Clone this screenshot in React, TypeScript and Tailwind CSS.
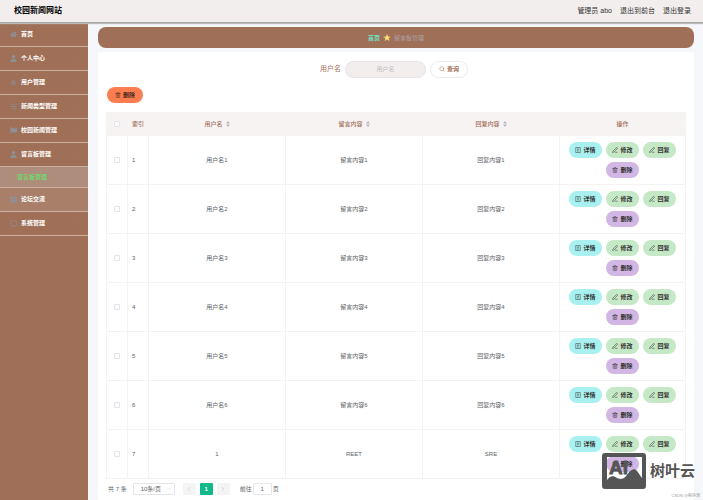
import type { ReactNode } from "react";
import { ChevronDown, ChevronLeft, ChevronRight, PenLine, Search, Trash2 } from "lucide-react";
import { FaBars, FaBell, FaFlag, FaHome, FaThLarge, FaUser } from "react-icons/fa";

type MenuItem = { label: string; icon: ReactNode; arrow: boolean; open?: boolean; light?: boolean };

const menu: MenuItem[] = [
  { label: "首页", icon: <FaHome />, arrow: false },
  { label: "个人中心", icon: <FaUser />, arrow: true },
  { label: "用户管理", icon: <FaBell className="opacity-50" />, arrow: true },
  { label: "新闻类型管理", icon: <FaBars className="opacity-70" />, arrow: true },
  { label: "校园新闻管理", icon: <FaFlag />, arrow: true },
  { label: "留言板管理", icon: <FaUser />, arrow: true, open: true },
  { label: "论坛交流", icon: <FaThLarge />, arrow: false, light: true },
  {
    label: "系统管理",
    icon: (
      <svg viewBox="0 0 16 16" width="1em" height="1em" fill="none" stroke="currentColor" strokeWidth="2" opacity=".7">
        <rect x="1" y="2" width="14" height="11" rx="1" />
        <path d="M4 15h8" />
      </svg>
    ),
    arrow: true,
  },
];

const rows = [
  ["用户名1", "留言内容1", "回复内容1"],
  ["用户名2", "留言内容2", "回复内容2"],
  ["用户名3", "留言内容3", "回复内容3"],
  ["用户名4", "留言内容4", "回复内容4"],
  ["用户名5", "留言内容5", "回复内容5"],
  ["用户名6", "留言内容6", "回复内容6"],
  ["1", "REET", "SRE"],
];

function Sheet({ className }: { className?: string }) {
  return (
    <svg viewBox="0 0 24 24" className={className} fill="none" stroke="currentColor" strokeWidth="2">
      <path d="M3 2h18v20H3zM8 8h8M8 12h8M8 17h3M14 17h2" />
    </svg>
  );
}

const actions = [
  { label: "详情", icon: Sheet, color: "bg-[#a9f0f0]" },
  { label: "修改", icon: PenLine, color: "bg-[#c5e8c6]" },
  { label: "回复", icon: PenLine, color: "bg-[#c5e8c6]" },
  { label: "删除", icon: Trash2, color: "bg-[#d2b6e4]" },
];

function Tick({ label }: { label: string }) {
  return (
    <input
      type="checkbox"
      aria-label={label}
      className="mx-auto block size-[6px] appearance-none rounded-[1px] border border-[#e2e4e9] bg-white checked:bg-[#10b88a]"
    />
  );
}

function SortHead({ label }: { label: string }) {
  return (
    <th className="border-r border-b border-[#f3f3f4] font-medium">
      <button className="inline-flex items-center gap-[3px]">
        {label}
        <svg viewBox="0 0 8 12" className="h-[6px] w-[4px] fill-[#b4b7c0]">
          <path d="M4 0 8 5H0zM4 12 0 7h8z" />
        </svg>
      </button>
    </th>
  );
}

export default function App() {
  return (
    <div className="relative flex min-h-screen flex-col bg-[#f5f7fa] font-['Liberation_Sans','Noto_Sans_CJK_SC',sans-serif] text-[6px] leading-[8px] text-[#606266]">
      <header className="z-10 flex h-[23px] items-center justify-between border-b border-[#a9a9ab] bg-[#f3eeee] pr-3 pl-[14px] shadow-[0_1px_1px_#bbbbbb]">
        <h1 className="text-[8px] leading-[12px] font-bold text-black">校园新闻网站</h1>
        <nav className="flex gap-2 text-[7px] text-[#333333]">
          <span>管理员 abo</span>
          <a href="#front">退出到前台</a>
          <a href="#logout">退出登录</a>
        </nav>
      </header>

      <div className="flex flex-1">
        <aside className="w-[88px] shrink-0 bg-[#9f6f57]">
          {menu.map((item) => (
            <div key={item.label}>
              <a
                href="#menu"
                className={`flex h-6 items-center border-b border-[#cbb0a2] pr-2 pb-px pl-[10px] font-bold text-white ${item.light ? "bg-[#a97f6a]" : ""}`}
              >
                <span className="mr-1 text-[7px] text-[#8f9096]">{item.icon}</span>
                <span className="flex-1">{item.label}</span>
                {item.arrow && <ChevronDown className="size-[4px] text-[#b7917d]" />}
              </a>
              {item.open && (
                <a
                  href="#board"
                  className="flex h-[21px] items-center border-b border-[#cbb0a2] bg-[#ae8d7c] pb-px pl-[17px] font-bold text-[#74d66e]"
                >
                  留言板管理
                </a>
              )}
            </div>
          ))}
        </aside>

        <main className="flex min-w-0 flex-1 flex-col pt-1 pr-[9px] pl-[10px]">
          <nav aria-label="路径" className="flex h-[21px] items-center justify-center gap-[3px] rounded-[8px] bg-[#9f6f57]">
            <a href="#home" className="font-bold text-[#6fe0c6]">首页</a>
            <span className="text-[8px] text-[#ffe27a]">★</span>
            <span className="text-[#aea1a4]">留言板管理</span>
          </nav>

          <section className="mt-1 flex-1 bg-white px-2 pt-2">
            <form className="flex h-[18px] items-center justify-center pr-1" onSubmit={(e) => e.preventDefault()}>
              <label htmlFor="username" className="mr-1 text-[7px] text-[#9f6f57]">用户名</label>
              <input
                id="username"
                placeholder="用户名"
                className="mr-1 h-[17px] w-[81px] rounded-full border border-[#e8e2e6] bg-[#f3eeee] text-center text-[6px] placeholder:text-[#c3bcc2]"
              />
              <button className="flex h-[17px] w-[38px] items-center justify-center gap-[2px] rounded-full border border-[#e9ebf0] bg-white font-bold text-[#9f6f57]">
                <Search className="size-[6px]" />
                查询
              </button>
            </form>

            <button className="mt-[9px] ml-px flex h-4 w-9 items-center justify-center gap-[2px] rounded-full bg-[#fc7d50] font-bold text-[#4a2c20]">
              <Trash2 className="size-[6px]" />
              删除
            </button>

            <table className="mt-[9px] w-full table-fixed border-separate border-spacing-0 border-t border-l border-[#f3f3f4] text-center">
              <colgroup>
                <col className="w-[21px]" />
                <col className="w-[21px]" />
                <col />
                <col />
                <col />
                <col className="w-[126px]" />
              </colgroup>
              <thead className="bg-[#f7f3f2] text-[#9f6f57]">
                <tr className="h-[23px]">
                  <th className="border-r border-b border-[#f3f3f4]"><Tick label="全选" /></th>
                  <th className="border-r border-b border-[#f3f3f4] pl-1 text-left font-medium">索引</th>
                  <SortHead label="用户名" />
                  <SortHead label="留言内容" />
                  <SortHead label="回复内容" />
                  <th className="border-r border-b border-[#f3f3f4] font-medium">操作</th>
                </tr>
              </thead>
              <tbody>
                {rows.map((cells, i) => (
                  <tr key={i} className="h-[49px]">
                    <td className="border-r border-b border-[#f3f3f4]"><Tick label={`选择第${i + 1}行`} /></td>
                    <td className="border-r border-b border-[#f3f3f4] pl-1 text-left">{i + 1}</td>
                    {cells.map((cell, j) => (
                      <td key={j} className="border-r border-b border-[#f3f3f4]">{cell}</td>
                    ))}
                    <td className="border-r border-b border-[#f3f3f4]">
                      <div className="flex flex-wrap justify-center gap-1 px-2">
                        {actions.map(({ label, icon: Icon, color }) => (
                          <button key={label} className={`flex h-4 w-[33px] items-center justify-center gap-[2px] rounded-full font-bold text-[#333333] ${color}`}>
                            <Icon className="size-[6px]" />
                            {label}
                          </button>
                        ))}
                      </div>
                    </td>
                  </tr>
                ))}
              </tbody>
            </table>

            <div className="flex h-5 items-center pl-[2px]">
              <span className="mr-[6px]">共 7 条</span>
              <span className="relative mr-2 flex items-center">
                <select aria-label="每页条数" className="h-3 w-[42px] appearance-none rounded-[1px] border border-[#e4e6eb] bg-white pl-[7px] text-[6px] leading-[8px]">
                  <option>10条/页</option>
                  <option>20条/页</option>
                </select>
                <ChevronDown className="pointer-events-none absolute right-1 size-[4px] text-[#c0c4cc]" />
              </span>
              <button aria-label="上一页" className="mr-1 flex h-3 w-[13px] items-center justify-center rounded-[1px] bg-[#f4f4f5] text-[#b4b8c0]">
                <ChevronLeft className="size-[6px]" />
              </button>
              <button className="mr-1 h-3 w-[13px] rounded-[1px] bg-[#10b88a] font-bold text-white">1</button>
              <button aria-label="下一页" className="mr-[10px] flex h-3 w-[13px] items-center justify-center rounded-[1px] bg-[#f4f4f5] text-[#b4b8c0]">
                <ChevronRight className="size-[6px]" />
              </button>
              <label htmlFor="page" className="mr-px">前往</label>
              <input id="page" defaultValue="1" className="mr-px h-3 w-[19px] rounded-[1px] border border-[#e4e6eb] text-center text-[6px]" />
              <span>页</span>
            </div>
          </section>
        </main>
      </div>

      <div className="pointer-events-none absolute right-2 bottom-[11px] z-20 flex items-center gap-1 text-[#555555]">
        <svg viewBox="0 0 44 36" className="h-9 w-11">
          <path
            fillRule="evenodd"
            fill="currentColor"
            d="M3 0h38a3 3 0 0 1 3 3v30a3 3 0 0 1-3 3H3a3 3 0 0 1-3-3V3a3 3 0 0 1 3-3zM5 4v23c3-4 6-5 10-2 4 2 7 1 10-3 3-5 7-8 10-4 2 2 3 5 5 7V4z"
          />
          <text x="7" y="21" fontSize="19" fontWeight="bold" fill="currentColor" stroke="currentColor" strokeWidth="0.8">AI</text>
        </svg>
        <span className="text-[15px] leading-[20px] font-bold">树叶云</span>
      </div>
      <span className="pointer-events-none absolute right-[3px] bottom-0 text-[4px] text-[#999999]">CSDN @程序源</span>
    </div>
  );
}
